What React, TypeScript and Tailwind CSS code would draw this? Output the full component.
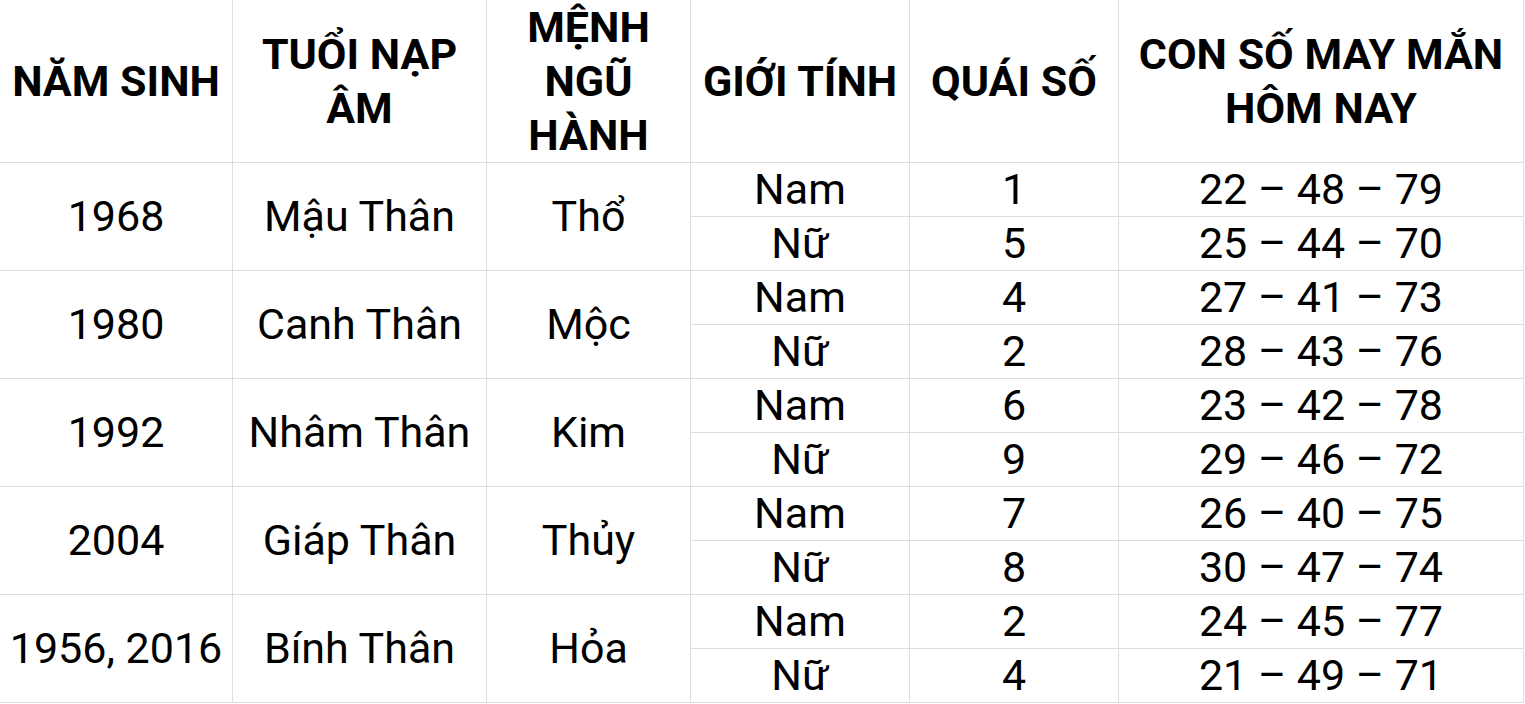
import React from "react";

const groups = [
  { year: "1968", tuoi: "Mậu Thân", menh: "Thổ", rows: [["Nam", "1", "22 – 48 – 79"], ["Nữ", "5", "25 – 44 – 70"]] },
  { year: "1980", tuoi: "Canh Thân", menh: "Mộc", rows: [["Nam", "4", "27 – 41 – 73"], ["Nữ", "2", "28 – 43 – 76"]] },
  { year: "1992", tuoi: "Nhâm Thân", menh: "Kim", rows: [["Nam", "6", "23 – 42 – 78"], ["Nữ", "9", "29 – 46 – 72"]] },
  { year: "2004", tuoi: "Giáp Thân", menh: "Thủy", rows: [["Nam", "7", "26 – 40 – 75"], ["Nữ", "8", "30 – 47 – 74"]] },
  { year: "1956, 2016", tuoi: "Bính Thân", menh: "Hỏa", rows: [["Nam", "2", "24 – 45 – 77"], ["Nữ", "4", "21 – 49 – 71"]] },
];

const cell = "flex items-center justify-center text-center border-r border-b border-[#dddddd] box-border";

export default function App() {
  return (
    <div className="bg-white w-[1525px] h-[704px] overflow-hidden text-black" style={{ fontFamily: "Roboto, 'Noto Sans', sans-serif" }}>
      <div className="grid grid-cols-[233px_254px_204px_219px_209px_405px] grid-rows-[163px_repeat(10,54px)] w-[1524px]">
        {["NĂM SINH", "TUỔI NẠP ÂM", "MỆNH NGŨ HÀNH", "GIỚI TÍNH", "QUÁI SỐ", "CON SỐ MAY MẮN HÔM NAY"].map((h, i) => (
          <div key={i} className={`${cell} font-bold text-[43px] leading-[54px] px-[8px]`}>
            {i === 2 ? (
              <span>MỆNH<br />NGŨ<br />HÀNH</span>
            ) : i === 1 ? (
              <span>TUỔI NẠP<br />ÂM</span>
            ) : i === 5 ? (
              <span>CON SỐ MAY MẮN<br />HÔM NAY</span>
            ) : (
              <span className="whitespace-nowrap">{h}</span>
            )}
          </div>
        ))}
        {groups.map((g, gi) => (
          <React.Fragment key={gi}>
            <div className={`${cell} row-span-2 text-[43px] leading-none whitespace-nowrap`}>{g.year}</div>
            <div className={`${cell} row-span-2 text-[43px] leading-none whitespace-nowrap`}>{g.tuoi}</div>
            <div className={`${cell} row-span-2 text-[43px] leading-none whitespace-nowrap`}>{g.menh}</div>
            {g.rows.map((r, ri) => (
              <React.Fragment key={ri}>
                <div
                  className={`${cell} text-[43px] leading-none whitespace-nowrap`}
                  style={{ gridColumnStart: 4, gridRowStart: 2 + gi * 2 + ri }}
                >
                  {r[0]}
                </div>
                <div
                  className={`${cell} text-[43px] leading-none whitespace-nowrap`}
                  style={{ gridColumnStart: 5, gridRowStart: 2 + gi * 2 + ri }}
                >
                  {r[1]}
                </div>
                <div
                  className={`${cell} text-[43px] leading-none whitespace-nowrap`}
                  style={{ gridColumnStart: 6, gridRowStart: 2 + gi * 2 + ri }}
                >
                  {r[2]}
                </div>
              </React.Fragment>
            ))}
          </React.Fragment>
        ))}
      </div>
    </div>
  );
}
